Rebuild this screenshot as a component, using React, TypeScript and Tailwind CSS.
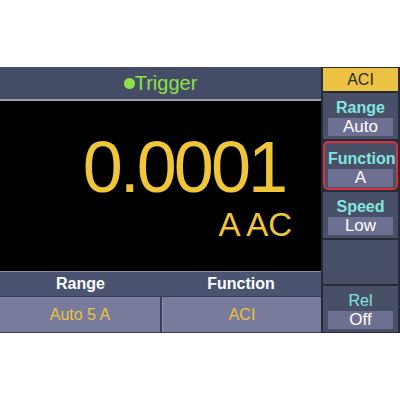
import React from 'react';

const font = { fontFamily: '"Liberation Sans", Arial, sans-serif' };

function SideCell({ title, value, bold = true, active = false }: { title: string; value: string; bold?: boolean; active?: boolean }) {
  return (
    <div
      className={`flex-1 flex flex-col items-stretch justify-end bg-[#485067] ${
        active ? 'border-2 border-[#d8323f] rounded-[5px] pb-[1px] px-[3px]' : 'pb-[3px] px-[5px]'
      }`}
    >
      <div className={`text-center text-[16px] leading-[20px] text-[#82e6df] ${bold ? 'font-bold' : ''}`}>{title}</div>
      <div className="h-[18px] bg-[#6d7090] text-center text-[17px] leading-[18px] text-white">{value}</div>
    </div>
  );
}

export default function App() {
  return (
    <div className="w-[400px] h-[400px] bg-white pt-[67px]" style={font}>
      <div className="flex w-[400px] h-[266px] bg-[#272b38] pr-[2px] gap-[2px]">
        {/* MAIN */}
        <div className="w-[321px] flex flex-col">
          <div className="h-[32px] bg-[#444c66] flex items-center justify-center">
            <span className="w-[11px] h-[11px] rounded-full bg-[#8de04a]" />
            <span className="text-[20px] text-[#8de04a]">Trigger</span>
          </div>
          <div className="h-[2px] bg-[#9a9fae]" />
          <div className="flex-1 bg-black flex flex-col items-end">
            <div className="pt-[30px] pr-[36px] text-[72px] leading-none tracking-[-3px] text-[#efc53a]">0.0001</div>
            <div className="mt-[5px] pr-[29px] text-[33px] leading-none text-[#efc53a]">A AC</div>
          </div>
          <div className="h-[1px] bg-[#8c90a0]" />
          <div className="h-[24px] bg-[#4a5370] flex text-white font-bold text-[16px]">
            <div className="w-[161px] flex items-center justify-center">Range</div>
            <div className="flex-1 flex items-center justify-center">Function</div>
          </div>
          <div className="h-[37px] bg-[#3a3f55] flex gap-[2px] pt-[1px] pb-[1px]">
            <div className="w-[160px] bg-[#797b9d] flex items-center justify-center text-[16px] text-[#e9c53c]">Auto 5 A</div>
            <div className="flex-1 bg-[#797b9d] border-l border-[#8d90ae] flex items-center justify-center text-[16px] text-[#e9c53c]">ACI</div>
          </div>
        </div>

        {/* SIDE PANEL */}
        <div className="w-[75px] flex flex-col gap-[2px] pt-[1px] pb-[1px]">
          <div className="h-[23px] bg-[#ecc243] flex items-center justify-center text-[16px] text-[#2a2a2a]">ACI</div>
          <SideCell title="Range" value="Auto" />
          <SideCell title="Function" value="A" active />
          <SideCell title="Speed" value="Low" />
          <div className="flex-1 bg-[#485067]" />
          <SideCell title="Rel" value="Off" bold={false} />
        </div>
      </div>
    </div>
  );
}
